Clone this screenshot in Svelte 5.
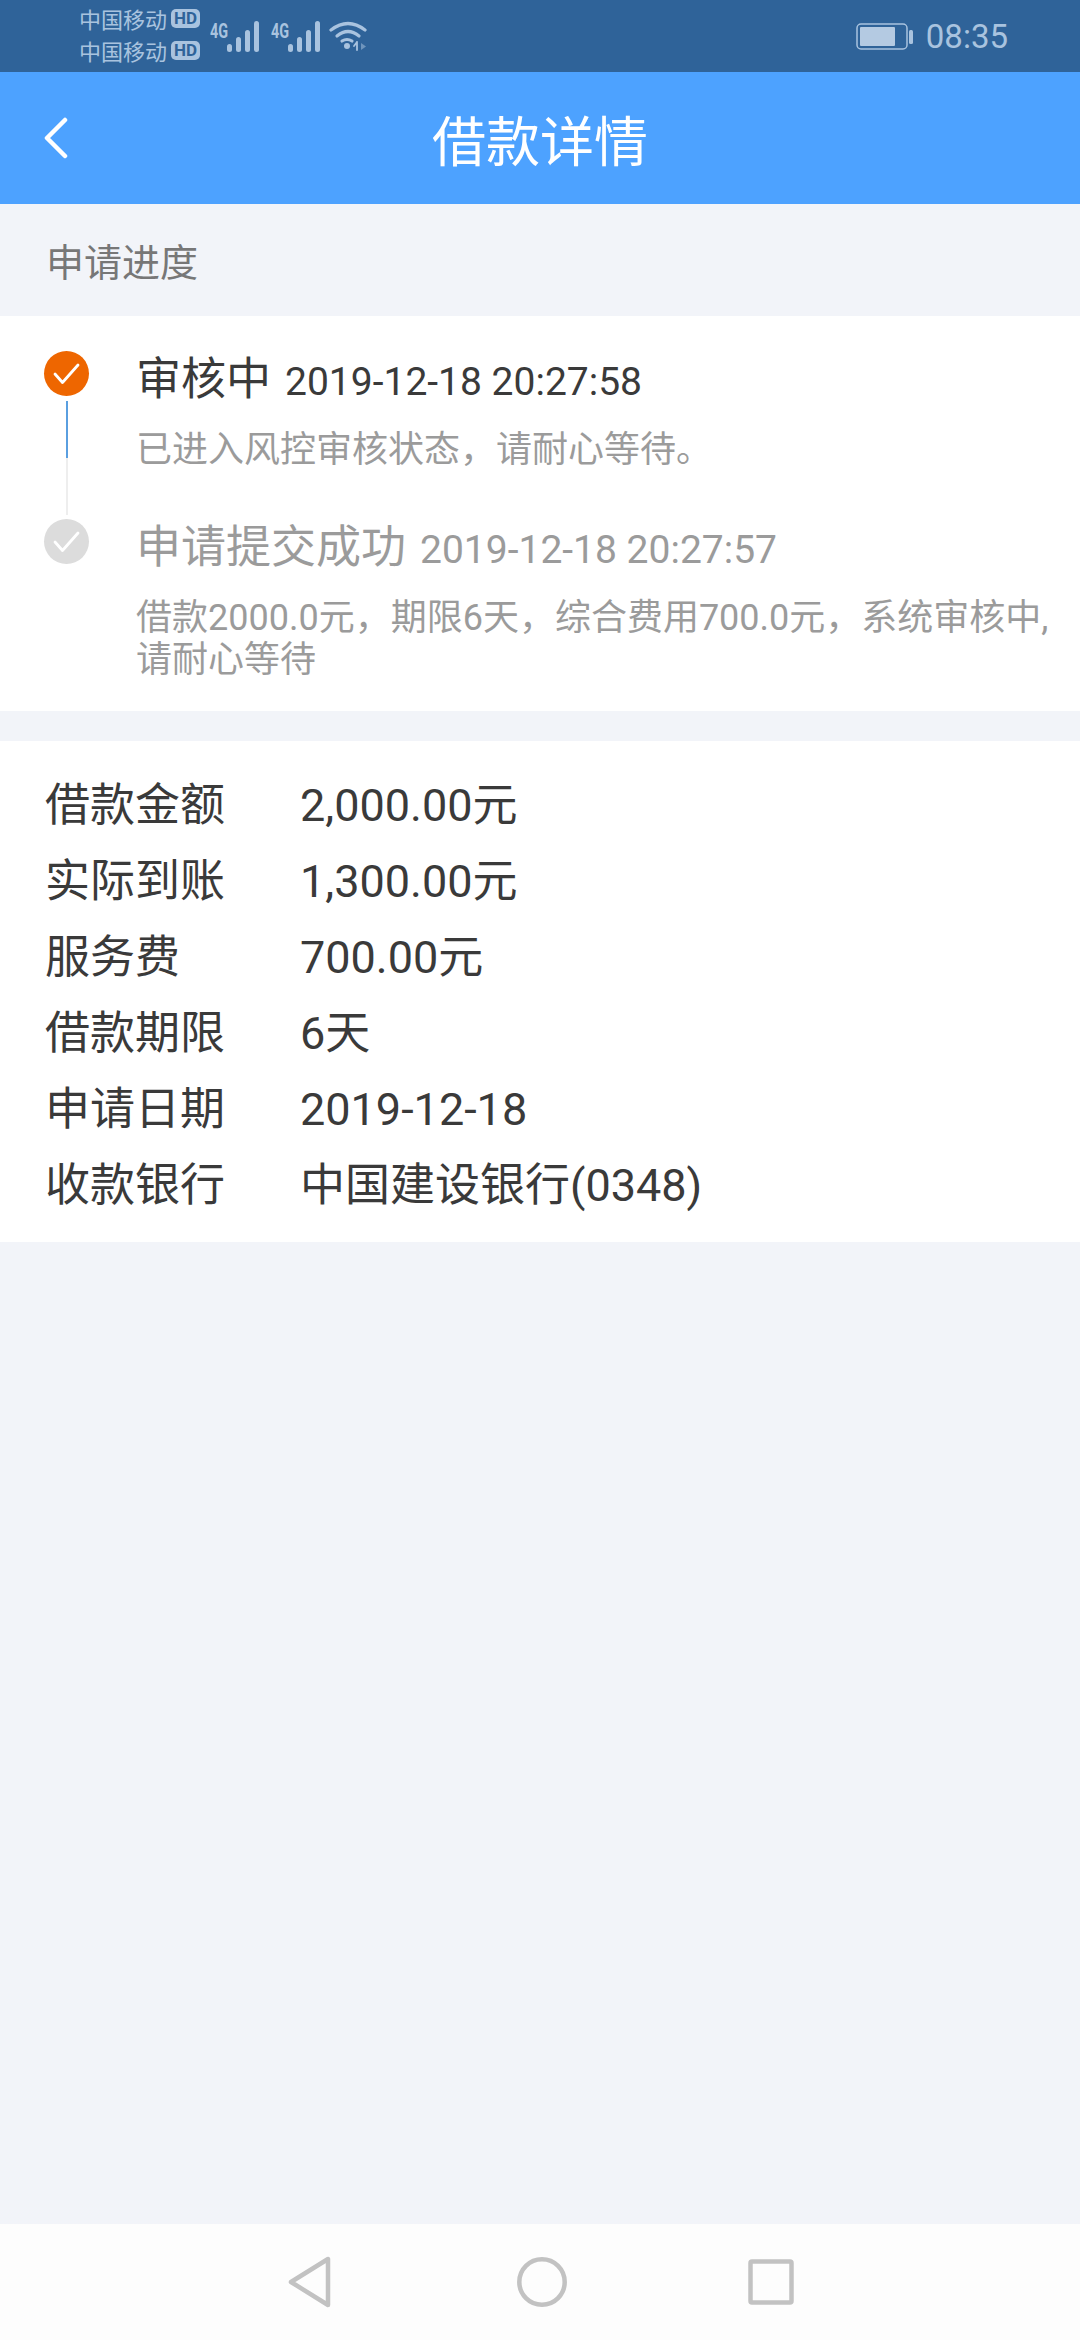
<script>
  const steps = [
    {
      title: '审核中',
      time: '2019-12-18 20:27:58',
      desc: ['已进入风控审核状态，请耐心等待。'],
      active: true
    },
    {
      title: '申请提交成功',
      time: '2019-12-18 20:27:57',
      desc: ['借款2000.0元，期限6天，综合费用700.0元，系统审核中,', '请耐心等待'],
      active: false
    }
  ];

  const details = [
    ['借款金额', '2,000.00元'],
    ['实际到账', '1,300.00元'],
    ['服务费', '700.00元'],
    ['借款期限', '6天'],
    ['申请日期', '2019-12-18'],
    ['收款银行', '中国建设银行(0348)']
  ];

  const signalBars = [
    [0, 23, 8],
    [9, 16, 15],
    [18, 9, 22],
    [27, 0, 31]
  ];
</script>

<div class="page">
  <div class="statusbar">
    <div class="carriers">
      <div class="carrier">中国移动<span class="hd">HD</span></div>
      <div class="carrier">中国移动<span class="hd">HD</span></div>
    </div>
    {#each [0, 1] as n}
      <div class="net">
        <span class="net-label">4G</span>
        <svg width="33" height="32" viewBox="0 0 33 32" fill="#a9c3df">
          {#each signalBars as [x, y, h]}
            <rect {x} y={y + 1} width="5" height={h} rx="2.5" />
          {/each}
        </svg>
      </div>
    {/each}
    <svg class="wifi" width="38" height="32" viewBox="0 0 38 32" fill="none" stroke="#a9c3df" stroke-width="3.2" stroke-linecap="round">
      <path d="M2 10 Q19 -3 36 10" />
      <path d="M8 16 Q19 7 30 16" />
      <path d="M13 21 Q18 18 23 21" />
      <circle cx="18" cy="26" r="3" fill="#a9c3df" stroke="none" />
      <path d="M28 22 V30 M25 26 L28 22" stroke-width="1.8" />
      <path d="M32 23 L37 26.5 L32 30 Z" fill="#6f95bd" stroke="none" />
    </svg>
    <div class="spacer"></div>
    <svg width="58" height="28" viewBox="0 0 58 28">
      <rect x="1" y="2" width="50" height="25" rx="4" fill="none" stroke="#a9c3df" stroke-width="1.5" />
      <rect x="4" y="5" width="35" height="19" rx="1" fill="#b4cae2" />
      <rect x="53" y="8" width="4" height="14" rx="1.5" fill="#a9c3df" />
    </svg>
    <span class="clock">08:35</span>
  </div>

  <header class="topbar">
    <svg class="back" width="28" height="44" viewBox="0 0 28 44" fill="none" stroke="#fff" stroke-width="4.5" stroke-linecap="round" stroke-linejoin="round">
      <path d="M23 3 L5 21 L23 39" />
    </svg>
    <h1>借款详情</h1>
  </header>

  <div class="section-title">申请进度</div>

  <section class="timeline">
    {#each steps as step, i}
      <div class="step" class:active={step.active}>
        <div class="rail">
          <span class="dot">
            <svg width="30" height="24" viewBox="0 0 30 24" fill="none" stroke="#fff" stroke-width="2.8" stroke-linecap="round" stroke-linejoin="round">
              <path d="M3 12 L10.5 20.5 L26 3" />
            </svg>
          </span>
          {#if i < steps.length - 1}
            <span class="line"></span>
          {/if}
        </div>
        <div class="step-body">
          <div class="step-head">
            <span class="step-title">{step.title}</span>
            <span class="step-time">{step.time}</span>
          </div>
          <div class="step-desc">
            {#each step.desc as line}
              <div>{line}</div>
            {/each}
          </div>
        </div>
      </div>
    {/each}
  </section>

  <section class="details">
    {#each details as [label, value]}
      <div class="row">
        <span class="label">{label}</span>
        <span class="value">{value}</span>
      </div>
    {/each}
  </section>

  <div class="fill"></div>

  <nav class="navbar">
    <svg width="46" height="52" viewBox="0 0 46 52" fill="none" stroke="#c2c2c2" stroke-width="4.5" stroke-linejoin="round">
      <path d="M41 3 V49 L4 26 Z" />
    </svg>
    <svg class="home" width="50" height="50" viewBox="0 0 50 50" fill="none" stroke="#c2c2c2" stroke-width="4.5">
      <circle cx="25" cy="25" r="22.7" />
    </svg>
    <svg width="46" height="46" viewBox="0 0 46 46" fill="none" stroke="#c2c2c2" stroke-width="4.5" stroke-linejoin="round">
      <rect x="2.5" y="2.5" width="41" height="41" rx="1.5" />
    </svg>
  </nav>
</div>

<style>
  :global(body) {
    margin: 0;
    background: #f2f4f9;
  }

  .page {
    width: 1080px;
    height: 2340px;
    display: flex;
    flex-direction: column;
    overflow: hidden;
    background: #f2f4f9;
    font-family: Roboto, "Noto Sans CJK SC", sans-serif;
  }

  .statusbar {
    height: 72px;
    flex: none;
    display: flex;
    align-items: center;
    padding-left: 79px;
    padding-right: 72px;
    background: #2f6399;
    color: #a9c3df;
  }

  .carriers {
    width: 121px;
    margin-right: 10px;
    margin-top: -4px;
  }

  .carrier {
    display: flex;
    align-items: center;
    justify-content: space-between;
    height: 32px;
    font-size: 22px;
    white-space: nowrap;
  }

  .hd {
    width: 29px;
    height: 19px;
    text-align: center;
    font-size: 17px;
    font-weight: 700;
    line-height: 19px;
    background: #a9c3df;
    color: #2f6399;
    border-radius: 5px;
  }

  .net {
    display: flex;
    align-items: flex-end;
    height: 32px;
    margin-right: 11px;
  }

  .net-label {
    align-self: flex-start;
    font-size: 20px;
    font-weight: 700;
    line-height: 22px;
    width: 17px;
    transform: scaleX(0.72);
    transform-origin: left;
  }

  .wifi {
    margin-left: -3px;
  }

  .spacer {
    flex: 1;
  }

  .clock {
    font-size: 33px;
    margin-left: 12px;
  }

  .topbar {
    height: 132px;
    flex: none;
    position: relative;
    display: flex;
    align-items: center;
    justify-content: center;
    background: #4da2ff;
  }

  .back {
    position: absolute;
    left: 42px;
    top: 45px;
  }

  h1 {
    margin: 0;
    font-size: 54px;
    font-weight: 400;
    color: #fff;
  }

  .section-title {
    height: 112px;
    flex: none;
    box-sizing: border-box;
    padding-left: 46px;
    line-height: 118px;
    font-size: 38px;
    color: #777;
  }

  .timeline {
    height: 395px;
    flex: none;
    box-sizing: border-box;
    padding-top: 35px;
    background: #fff;
  }

  .step {
    display: flex;
    height: 168px;
    color: #9b9b9b;
  }

  .rail {
    width: 136px;
    flex: none;
    position: relative;
    padding-left: 44px;
    box-sizing: border-box;
  }

  .dot {
    width: 45px;
    height: 45px;
    border-radius: 50%;
    display: flex;
    align-items: center;
    justify-content: center;
    background: #dcdcdc;
  }

  .active .dot {
    background: #ee6600;
  }

  .line {
    position: absolute;
    left: 66px;
    top: 50px;
    width: 2px;
    height: 114px;
    background: linear-gradient(#5a9fe0 50%, #eeeeee 50%);
  }

  .step-head {
    display: flex;
    align-items: baseline;
    height: 50px;
    line-height: 58px;
    white-space: nowrap;
  }

  .step-title {
    font-size: 45px;
    margin-right: 14px;
  }

  .active .step-title,
  .active .step-time {
    color: #3a3a3a;
  }

  .step-time {
    font-size: 39px;
  }

  .step-desc {
    margin-top: 28px;
    font-size: 36px;
    line-height: 42px;
    white-space: nowrap;
  }

  .details {
    margin-top: 30px;
    height: 501px;
    flex: none;
    box-sizing: border-box;
    padding-top: 27px;
    background: #fff;
  }

  .row {
    height: 76px;
    line-height: 76px;
    display: flex;
    padding-left: 45px;
    font-size: 45px;
    color: #3a3a3a;
  }

  .label {
    width: 255px;
    flex: none;
  }

  .fill {
    flex: 1;
  }

  .navbar {
    height: 116px;
    flex: none;
    display: flex;
    align-items: center;
    justify-content: center;
    gap: 181px;
    background: #fdfdfd;
  }

  .home {
    margin-left: 3px;
  }
</style>
